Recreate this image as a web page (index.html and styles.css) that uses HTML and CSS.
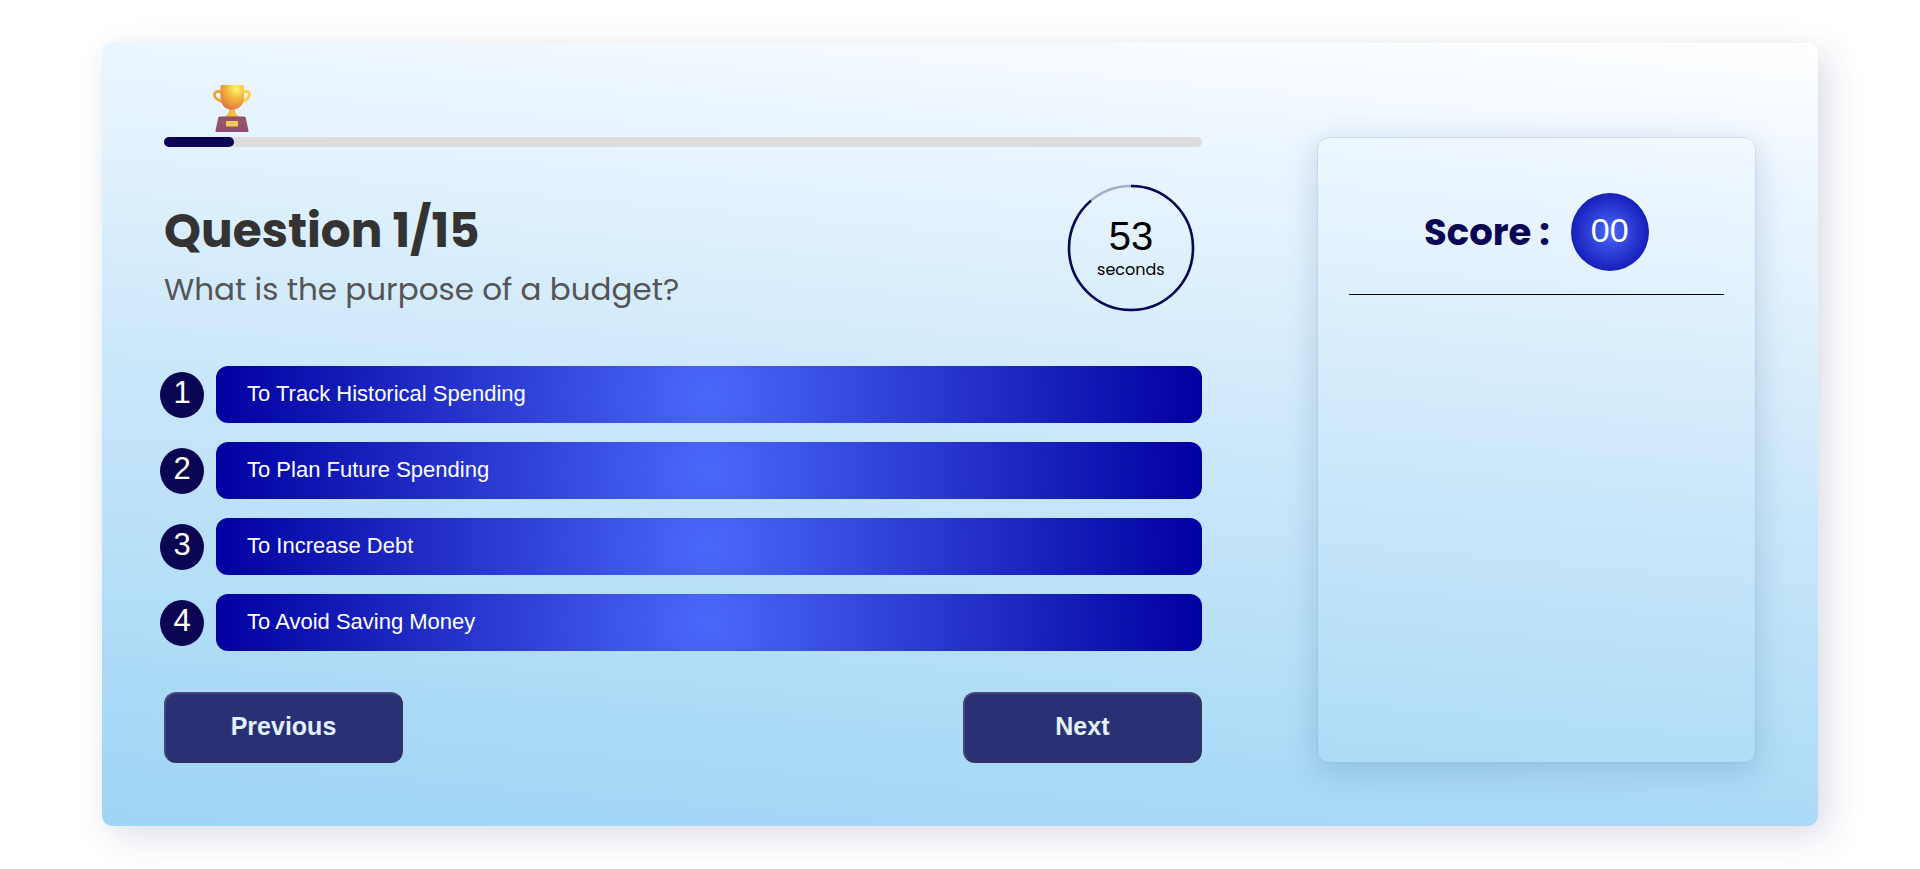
FILE: index.html
```html
<!DOCTYPE html>
<html lang="en">
<head>
<meta charset="utf-8">
<meta name="viewport" content="width=device-width, initial-scale=1">
<title>Budget Quiz</title>
<link rel="stylesheet" href="styles.css">
</head>
<body>
<main class="page">
  <div class="card">
    <section class="quiz">
      <div class="progress" role="progressbar" aria-label="Quiz progress" aria-valuemin="0" aria-valuemax="15" aria-valuenow="1">
        <div class="progress-fill" style="width: 6.75%"></div>
        <svg class="trophy" style="left: 6.55%" viewBox="0 0 38 47" aria-hidden="true">
          <defs>
            <radialGradient id="cup" cx="0.68" cy="0.15" r="0.9">
              <stop offset="0" stop-color="#fff96b"/>
              <stop offset="0.5" stop-color="#f3b03c"/>
              <stop offset="0.85" stop-color="#e8873c"/>
              <stop offset="1" stop-color="#d9705a"/>
            </radialGradient>
            <linearGradient id="stem" x1="0" x2="1">
              <stop offset="0" stop-color="#e89a35"/>
              <stop offset="0.5" stop-color="#fbc43b"/>
              <stop offset="1" stop-color="#f2b43a"/>
            </linearGradient>
            <linearGradient id="base" x1="0" x2="0" y1="0" y2="1">
              <stop offset="0" stop-color="#8a4f60"/>
              <stop offset="0.3" stop-color="#9a566a"/>
              <stop offset="1" stop-color="#8e4a70"/>
            </linearGradient>
          </defs>
          <path d="M9 8C7 5.600 1.400 5.500 1.500 10.200C1.600 13.500 6 15.500 10 17" fill="none" stroke="#e9a638" stroke-width="2.800"/>
          <path d="M29 8C31 5.600 36.600 5.500 36.500 10.200C36.400 13.500 32 15.500 28 17" fill="none" stroke="#fbd03c" stroke-width="2.800"/>
          <path d="M16 23H22C21.500 28 23 29.500 26.500 32H11.500C15 29.500 16.500 28 16 23Z" fill="url(#stem)"/>
          <path d="M8.500 0H29.500Q31 0 31 1.500V12C31 19.500 26 24.800 19 24.800C12 24.800 7.500 19.500 7.500 12V1.500Q7.500 0 8.500 0Z" fill="url(#cup)"/>
          <path d="M7 31.500H31Q32.500 31.500 32.800 33L35.500 45.500Q35.600 47 34.500 47H3.500Q2.400 47 2.500 45.500L5.200 33Q5.500 31.500 7 31.500Z" fill="url(#base)"/>
          <rect x="13" y="36" width="12" height="5.500" rx="0.500" fill="#f8c75a"/>
        </svg>
      </div>

      <header class="question">
        <div class="question-text">
          <h1 class="question-count">Question 1/15</h1>
          <p class="question-body">What is the purpose of a budget?</p>
        </div>
        <div class="timer" role="timer">
          <svg class="timer-ring" viewBox="0 0 128 128" aria-hidden="true">
            <circle class="ring-track" cx="64" cy="64" r="62"/>
            <circle class="ring-left" cx="64" cy="64" r="62" pathLength="60" stroke-dasharray="53.300 60" transform="rotate(-90 64 64)"/>
          </svg>
          <span class="timer-value">53</span>
          <span class="timer-unit">seconds</span>
        </div>
      </header>

      <ol class="options">
        <li class="option"><span class="badge">1</span><button class="answer" type="button">To Track Historical Spending</button></li>
        <li class="option"><span class="badge">2</span><button class="answer" type="button">To Plan Future Spending</button></li>
        <li class="option"><span class="badge">3</span><button class="answer" type="button">To Increase Debt</button></li>
        <li class="option"><span class="badge">4</span><button class="answer" type="button">To Avoid Saving Money</button></li>
      </ol>

      <nav class="pager">
        <button class="nav-button" type="button">Previous</button>
        <button class="nav-button" type="button">Next</button>
      </nav>
    </section>

    <aside class="score-panel">
      <div class="score-head">
        <h2 class="score-label">Score :</h2>
        <span class="score-value">00</span>
      </div>
    </aside>
  </div>
</main>
</body>
</html>
```
FILE: styles.css
```css
* {
  box-sizing: border-box;
}

body {
  margin: 0;
  background: #fff;
  font-family: "Poppins", "Inter", sans-serif;
}

.page {
  padding: 43px 102px;
}

.card {
  display: grid;
  grid-template-columns: 26fr 11fr;
  gap: 115px;
  padding: 94px 62px 63px;
  border-radius: 10px;
  background: linear-gradient(5deg, #9fd5f5 0%, #abdaf6 17%, #b3def7 25%, #cae7fa 50%, #e5f3fd 76%, #ecf6fe 84%, #f7fbff 93%, #fff 100%);
  box-shadow: 10px 10px 36px rgba(20, 40, 100, 0.15), 0 0 20px rgba(0, 0, 0, 0.02);
}

.progress {
  position: relative;
  height: 10px;
  border-radius: 5px;
  background: #ddd;
}

.progress-fill {
  height: 100%;
  border-radius: 5px;
  background: #0a0654;
}

.trophy {
  position: absolute;
  bottom: 15px;
  width: 38px;
  height: 47px;
  margin-left: -19px;
}

.question {
  display: flex;
  justify-content: space-between;
  margin: 37px 7px 49px 0;
}

.question-text {
  padding-top: 17px;
}

.question-count {
  margin: 0;
  color: #333;
  font-size: 47px;
  font-weight: 700;
  line-height: 60px;
}

.question-body {
  margin: 0;
  color: #555;
  font-size: 31px;
  font-weight: 400;
  line-height: 56px;
}

.timer {
  position: relative;
  display: flex;
  flex-direction: column;
  align-items: center;
  width: 128px;
  height: 128px;
  padding-top: 32px;
  color: #000;
}

.timer-ring {
  position: absolute;
  inset: 0;
  width: 100%;
  height: 100%;
  fill: none;
  stroke: #0a0654;
  stroke-width: 2.5;
}

.ring-track {
  stroke-opacity: 0.3;
}

.timer-value {
  font-family: "Liberation Sans", Arial, sans-serif;
  font-size: 40px;
  line-height: 40px;
}

.timer-unit {
  font-size: 16px;
  line-height: 28px;
}

.options {
  display: grid;
  gap: 19px;
  margin: 0 0 41px -4px;
  padding: 0;
  list-style: none;
  font-family: "Liberation Sans", Arial, sans-serif;
}

.option {
  display: flex;
  align-items: center;
  gap: 12px;
}

.badge {
  flex: none;
  width: 44px;
  height: 46px;
  border-radius: 50%;
  background: #0a0654;
  color: #fff;
  font-size: 31px;
  line-height: 41px;
  text-align: center;
}

.answer {
  flex: 1;
  height: 57px;
  padding: 0 31px 2px;
  border: 0;
  border-radius: 12px;
  background: radial-gradient(circle, #4b68f9, #0000a0);
  color: #fff;
  font-family: inherit;
  font-size: 22px;
  text-align: left;
}

.pager {
  display: flex;
  justify-content: space-between;
}

.nav-button {
  width: 239px;
  height: 71px;
  padding-bottom: 3px;
  border: 2px solid;
  border-color: #2c235b #14083e #14083e #2c235b;
  border-radius: 12px;
  background: #0a0654;
  color: aliceblue;
  font-family: "Liberation Sans", Arial, sans-serif;
  font-size: 25px;
  font-weight: 700;
  opacity: 0.8;
}

.score-panel {
  padding: 55px 31px;
  border: 1px solid rgba(0, 50, 120, 0.14);
  border-radius: 12px;
  box-shadow: 0 8px 32px rgba(31, 80, 135, 0.2);
}

.score-head {
  display: flex;
  align-items: center;
  justify-content: center;
  gap: 21px;
  padding-bottom: 23px;
  border-bottom: 1px solid #000;
}

.score-label {
  margin: 0;
  color: #0a0654;
  font-size: 37px;
  font-weight: 700;
}

.score-value {
  width: 78px;
  height: 78px;
  border-radius: 50%;
  background: radial-gradient(circle, #4b68f9, #0000a0);
  color: #fff;
  font-family: "Liberation Sans", Arial, sans-serif;
  font-size: 34px;
  line-height: 75px;
  text-align: center;
}
```
